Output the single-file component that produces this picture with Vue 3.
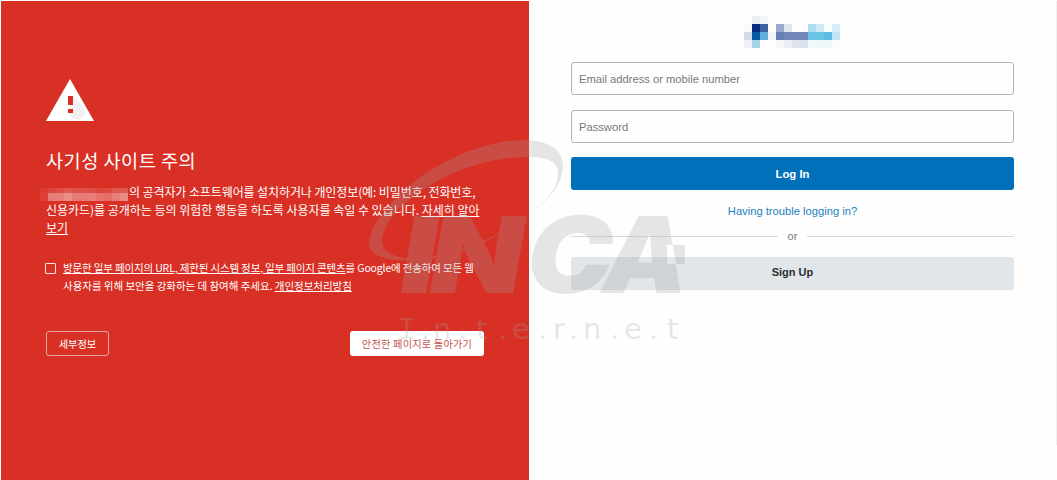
<script setup>
import { ref } from "vue";

const report = ref(false);
const account = ref("");
const password = ref("");

const logoPixels = [
  [16, 0, "#e9eff1"],
  [24, 0, "#f2f5f5"],
  [8, 8, "#f8f9fa"],
  [16, 8, "#082d80"],
  [24, 8, "#3c62a0"],
  [40, 8, "#9aaace"],
  [48, 8, "#dfe4ed"],
  [72, 8, "#aeddef"],
  [80, 8, "#cdeaf5"],
  [88, 8, "#f8fcfd"],
  [96, 8, "#d4edf6"],
  [8, 16, "#d2dbe8"],
  [16, 16, "#0758a5"],
  [24, 16, "#64b0d9"],
  [32, 16, "#f3f5f7"],
  [40, 16, "#6680b3"],
  [48, 16, "#7187b7"],
  [56, 16, "#7187b7"],
  [64, 16, "#7088b8"],
  [72, 16, "#6bc4e5"],
  [80, 16, "#69c5e6"],
  [88, 16, "#5dbde2"],
  [96, 16, "#bfe4f3"],
  [8, 24, "#edf1f5"],
  [16, 24, "#a4d2e9"],
  [40, 24, "#f5f7f9"],
  [48, 24, "#eceff4"],
  [56, 24, "#dde4ec"],
  [64, 24, "#dbe2ec"],
  [72, 24, "#f0f8fa"],
  [80, 24, "#eef7fa"],
  [88, 24, "#edf7fa"],
  [96, 24, "#f8fcfc"],
];

// opacity of each masked block, top row then bottom row
const maskBlocks = [
  [0.05, 0.1, 0.14, 0.2, 0.16, 0.16, 0.14, 0.1, 0.12, 0.18, 0.2],
  [0.08, 0.38, 0.38, 0.45, 0.37, 0.36, 0.38, 0.33, 0.3, 0.38, 0.44],
];
</script>

<template>
  <div class="screen">
    <section class="warning">
      <svg class="warning-icon" width="48" height="42" viewBox="0 0 48 42">
        <path d="M24 0 48 42H0z" fill="#fff" />
        <path d="m27 17 9 9 4 9-5 5h-8l-5-6z" fill="#e8e8e8" opacity="0.6" />
        <path d="M22 17h5v9h-5zM22 30h5v4h-5z" fill="#d93025" />
      </svg>
      <h1>사기성 사이트 주의</h1>
      <p class="message">
        <svg class="masked" width="88" height="13" shape-rendering="crispEdges">
          <template v-for="(row, y) in maskBlocks" :key="y">
            <rect
              v-for="(opacity, x) in row"
              :key="x"
              :x="x * 8"
              :y="y * 5"
              width="8"
              :height="y ? 8 : 5"
              fill="#fff"
              :fill-opacity="opacity"
            />
          </template></svg><span class="first">의 공격자가 소프트웨어를 설치하거나 개인정보(예: 비밀번호, 전화번호,</span><br />
        신용카드)를 공개하는 등의 위험한 행동을 하도록 사용자를 속일 수 있습니다. <u>자세히 알아</u><br />
        <u>보기</u>
      </p>
      <label class="report">
        <input v-model="report" type="checkbox" />
        <span>
          <span class="tight"><u>방문한 일부 페이지의 URL, 제한된 시스템 정보, 일부 페이지 콘텐츠</u>를 Google에 전송하여 모든 웹</span><br />
          사용자를 위해 보안을 강화하는 데 참여해 주세요. <u>개인정보처리방침</u>
        </span>
      </label>
      <div class="actions">
        <button class="details">세부정보</button>
        <button class="back">안전한 페이지로 돌아가기</button>
      </div>
    </section>

    <section class="login">
      <svg class="logo" width="112" height="32" shape-rendering="crispEdges">
        <rect
          v-for="([x, y, fill], index) in logoPixels"
          :key="index"
          :x="x"
          :y="y"
          width="8"
          height="8"
          :fill="fill"
        />
      </svg>
      <input v-model="account" class="field" placeholder="Email address or mobile number" />
      <input v-model="password" class="field" type="password" placeholder="Password" />
      <button class="primary">Log In</button>
      <a class="trouble">Having trouble logging in?</a>
      <div class="divider"><span>or</span></div>
      <button class="secondary">Sign Up</button>
    </section>

    <svg class="watermark" width="1057" height="480" viewBox="0 0 1057 480">
      <mask id="notch" maskUnits="userSpaceOnUse" x="0" y="0" width="1057" height="480">
        <path d="M0 0h1057v480H0z" fill="#fff" />
        <path d="M667 245h18v19h-18z" fill="#000" />
      </mask>
      <g fill="#a0a0a0" opacity="0.26">
        <path
          d="M529 214C550 200 563 183 563 166C562 144 540 138 510 141C472 145 425 168 397 197C377 217 366 237 370 248C376 259 393 261 412 260C446 259 478 248 504 231C478 244 447 256 420 258C397 260 382 253 382 241C384 216 414 193 443 178C475 162 503 157 529 157C548 157 558 162 558 173C558 188 547 201 529 214Z"
        />
        <g mask="url(#notch)">
          <g transform="translate(0 293) skewX(-10)" class="brand">
            <text x="395" y="0" textLength="37" lengthAdjust="spacingAndGlyphs">I</text>
            <text x="424" y="0" textLength="95" lengthAdjust="spacingAndGlyphs">N</text>
            <text x="522" y="0" textLength="86" lengthAdjust="spacingAndGlyphs">C</text>
            <text x="597" y="0" textLength="86" lengthAdjust="spacingAndGlyphs">A</text>
          </g>
        </g>
        <path d="M673 245h12v19h-9z" />
      </g>
      <text
        class="tagline"
        x="398 421 433 458 476 498 512 538 553 569 583 610 624 649 667"
        y="339"
      ><tspan class="serif">I</tspan>.n.t.e.r.n.e.t</text>
    </svg>
  </div>
</template>

<style>
body {
  margin: 0;
  background-color: #fefefe;
}
</style>

<style scoped>
.screen {
  position: relative;
  display: flex;
  box-sizing: border-box;
  width: 1057px;
  height: 480px;
  padding: 1px 0 0 1px;
  overflow: hidden;
  font-family: "Liberation Sans", "Noto Sans CJK KR", sans-serif;
}

.warning {
  box-sizing: border-box;
  width: 528px;
  padding: 78px 45px 0 45px;
  background-color: #d93025;
  color: #fff;
  font-family: "Noto Sans CJK KR", sans-serif;
}

.warning-icon {
  display: block;
}

h1 {
  margin: 23px 0 0;
  font-size: 18.6px;
  font-weight: 400;
  letter-spacing: 0.5px;
  line-height: 32px;
}

.message {
  margin: 7px 0 0;
  font-size: 12px;
  letter-spacing: -0.02px;
  line-height: 17.5px;
  white-space: nowrap;
}

.masked {
  height: 13px;
  margin-left: -6px;
  vertical-align: -4px;
}

.first {
  margin-left: 1px;
  letter-spacing: -0.1px;
}

.report {
  display: flex;
  gap: 7px;
  margin: 23px 0 0 -1px;
  font-size: 10.5px;
  letter-spacing: -0.03px;
  line-height: 17.5px;
  white-space: nowrap;
}

.tight {
  letter-spacing: -0.15px;
}

.report input {
  box-sizing: border-box;
  width: 11px;
  height: 11px;
  margin: 4px 0 0;
  border: 1px solid #fbe3e1;
  border-radius: 1px;
  appearance: none;
}

.actions {
  display: flex;
  justify-content: space-between;
  margin-top: 37px;
}

button {
  padding: 0;
  border: 0;
  border-radius: 3px;
  font-family: inherit;
  cursor: pointer;
}

.actions button {
  height: 25px;
  font-size: 10.2px;
}

.details {
  width: 63px;
  border: 1px solid #eda59f;
  background-color: transparent;
  color: #fff;
}

.actions .back {
  width: 134px;
  background-color: #fff;
  color: #c5544d;
  letter-spacing: 0.2px;
}

.login {
  display: flex;
  flex: 1;
  flex-direction: column;
  box-sizing: border-box;
  height: 444px;
  padding: 15px 42px 0;
  border-right: 1px solid #f0f0f0;
}

.logo {
  align-self: center;
  margin: 0 2px 14px 0;
}

.field {
  box-sizing: border-box;
  height: 33px;
  margin: 0 0 15px;
  padding: 0 7px;
  border: 1px solid #b4b7ba;
  border-radius: 3px;
  background-color: transparent;
  font-family: inherit;
  font-size: 11.2px;
}

.field::placeholder {
  color: #75797d;
}

.login button {
  height: 33px;
  font-size: 11.3px;
  font-weight: 700;
}

.login .primary {
  margin-top: -1px;
  background-color: #0070ba;
  color: #fff;
}

.trouble {
  margin-top: 13px;
  color: #2381bf;
  font-size: 11.2px;
  line-height: 16px;
  text-align: center;
}

.divider {
  display: flex;
  align-items: center;
  gap: 10px;
  margin: 9px 0 13px;
  color: #75797d;
  font-size: 11px;
  line-height: 16px;
}

.divider::before,
.divider::after {
  flex: 1;
  height: 1px;
  background-color: #d5d8db;
  content: "";
}

.login .secondary {
  padding-bottom: 3px;
  background-color: #e1e6ea;
  color: #2c2e2f;
  font-size: 11px;
}

.watermark {
  position: absolute;
  top: 0;
  left: 0;
  pointer-events: none;
}

.brand {
  font-family: Inter, sans-serif;
  font-size: 106px;
  font-weight: 900;
}

.tagline {
  fill: #a0a0a0;
  fill-opacity: 0.26;
  font-family: "DejaVu Sans", sans-serif;
  font-size: 29px;
}

.serif {
  font-family: "DejaVu Sans Mono", monospace;
}
</style>
